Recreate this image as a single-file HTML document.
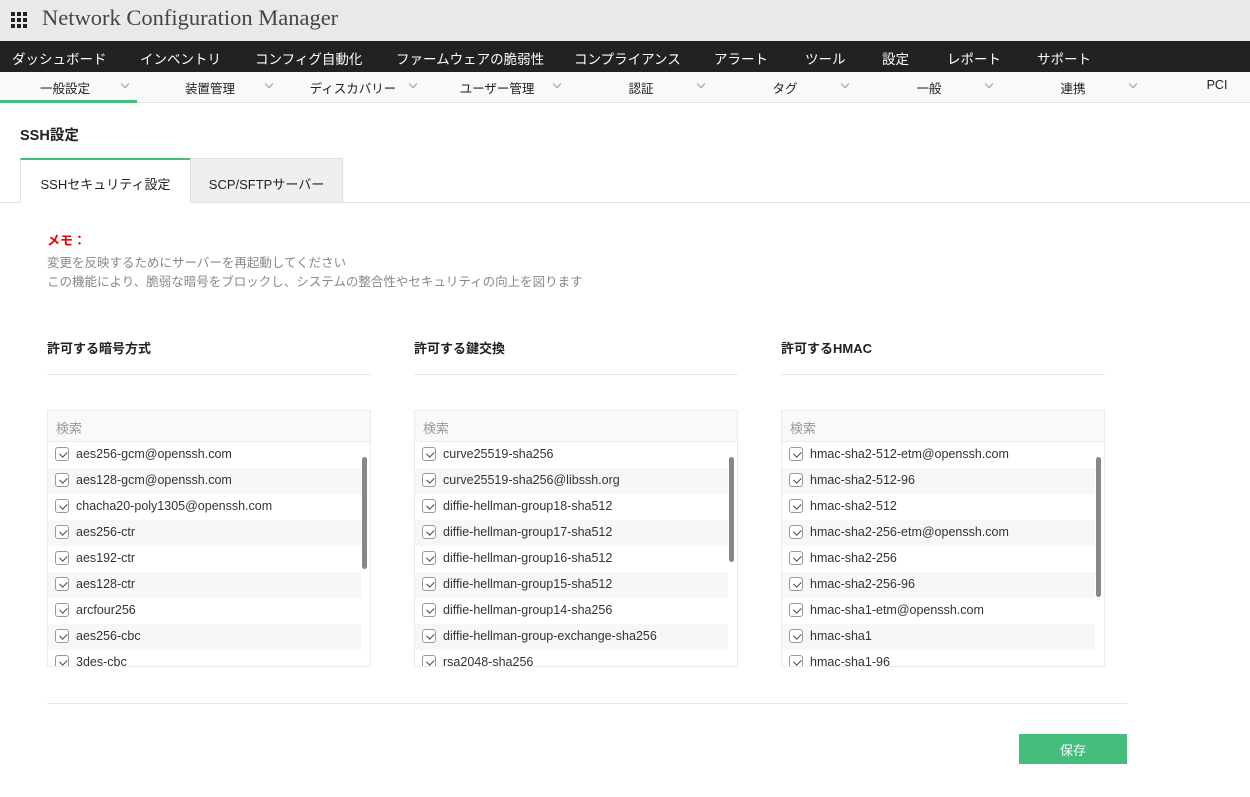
<!DOCTYPE html>
<html><head><meta charset="utf-8">
<style>
*{margin:0;padding:0;box-sizing:border-box}
body{width:1250px;height:797px;overflow:hidden;background:#fff;font-family:"Liberation Sans","Noto Sans CJK JP",sans-serif;position:relative;color:#222}
.a{position:absolute}
#hdr{left:0;top:0;width:1250px;height:41px;background:#e9e9e9}
#hdr .t{left:42px;top:5px;font-family:"Liberation Serif","Noto Serif CJK SC",serif;font-size:22.5px;color:#444;white-space:nowrap}
#nav{left:0;top:41px;width:1250px;height:31px;background:#222}
#nav span{position:absolute;top:7px;color:#fff;font-size:13.5px;white-space:nowrap}
#sub{left:0;top:72px;width:1250px;height:31px;background:#f9f9f9;border-bottom:1px solid #e6e6e6}
#sub span{position:absolute;top:6px;font-size:12.5px;color:#222;white-space:nowrap;transform:translateX(-50%)}
.chev{position:absolute;top:9px;width:6px;height:6px;border-right:1px solid #999;border-bottom:1px solid #999;transform:rotate(45deg)}
.list{width:324px;height:257px;border:1px solid #ececec;overflow:hidden;background:#fff}
.list .s{height:31px;background:#f9f9f9;border-bottom:1px solid #ececec;color:#999;font-size:13px;padding:7px 8px}
.row{height:26px;font-size:12.5px;color:#333;padding:5px 0 0 28px;position:relative;white-space:nowrap;width:313px}
.row:nth-child(even){background:#f7f7f7}
.row i{position:absolute;left:7px;top:5px;width:14px;height:14px;border:1px solid #999;border-radius:3px;background:#fff}
.row i:after{content:"";position:absolute;left:3px;top:1px;width:6px;height:3.5px;border-left:1.3px solid #444;border-bottom:1.3px solid #444;transform:rotate(-45deg) translate(-1px,2px)}
.sb{position:absolute;right:3px;width:5px;background:#888;border-radius:3px}
.h{font-size:13px;font-weight:bold;color:#222}
.ul{height:1px;background:#e8e8e8;width:324px}
</style></head><body>
<div id="hdr" class="a">
<svg class="a" style="left:11px;top:12px" width="17" height="17"><g fill="#222"><rect x="0" y="0" width="4" height="4"/><rect x="6" y="0" width="4" height="4"/><rect x="12" y="0" width="4" height="4"/><rect x="0" y="6" width="4" height="4"/><rect x="6" y="6" width="4" height="4"/><rect x="12" y="6" width="4" height="4"/><rect x="0" y="12" width="4" height="4"/><rect x="6" y="12" width="4" height="4"/><rect x="12" y="12" width="4" height="4"/></g></svg>
<div class="a t">Network Configuration Manager</div></div>
<div id="nav" class="a">
<span style="left:12px">ダッシュボード</span><span style="left:140px">インベントリ</span><span style="left:255px">コンフィグ自動化</span><span style="left:396px">ファームウェアの脆弱性</span><span style="left:574px">コンプライアンス</span><span style="left:714px">アラート</span><span style="left:805px">ツール</span><span style="left:882px">設定</span><span style="left:947px">レポート</span><span style="left:1037px">サポート</span>
</div>
<div id="sub" class="a">
<span style="left:65px">一般設定</span><div class="chev" style="left:122px"></div>
<span style="left:210px">装置管理</span><div class="chev" style="left:266px"></div>
<span style="left:353px">ディスカバリー</span><div class="chev" style="left:410px"></div>
<span style="left:497px">ユーザー管理</span><div class="chev" style="left:554px"></div>
<span style="left:641px">認証</span><div class="chev" style="left:698px"></div>
<span style="left:785px">タグ</span><div class="chev" style="left:842px"></div>
<span style="left:929px">一般</span><div class="chev" style="left:986px"></div>
<span style="left:1073px">連携</span><div class="chev" style="left:1130px"></div>
<span style="left:1217px">PCI</span>
<div class="a" style="left:0;top:28px;width:137px;height:3px;background:#45be7d"></div>
</div>
<div class="a" style="left:20px;top:124px;font-size:14.5px;font-weight:bold">SSH設定</div>
<div class="a" style="left:0;top:202px;width:1250px;height:1px;background:#e2e2e2"></div>
<div class="a" style="left:20px;top:158px;width:171px;height:45px;background:#fff;border-top:2px solid #45be7d;border-left:1px solid #e2e2e2;border-right:1px solid #e2e2e2;font-size:13px;text-align:center;padding-top:14px">SSHセキュリティ設定</div>
<div class="a" style="left:190px;top:158px;width:153px;height:44px;background:#efefef;border:1px solid #e0e0e0;border-bottom:none;font-size:13px;text-align:center;padding-top:15px">SCP/SFTPサーバー</div>
<div class="a" style="left:47px;top:230px;font-size:13px;font-weight:bold;color:#e00">メモ：</div>
<div class="a" style="left:47px;top:254px;font-size:12.5px;color:#888;line-height:19px">変更を反映するためにサーバーを再起動してください<br>この機能により、脆弱な暗号をブロックし、システムの整合性やセキュリティの向上を図ります</div>

<div class="a h" style="left:47px;top:338px">許可する暗号方式</div>
<div class="a h" style="left:414px;top:338px">許可する鍵交換</div>
<div class="a h" style="left:781px;top:338px">許可するHMAC</div>
<div class="a ul" style="left:47px;top:374px"></div>
<div class="a ul" style="left:414px;top:374px"></div>
<div class="a ul" style="left:781px;top:374px"></div>

<div class="a list" style="left:47px;top:410px"><div class="s">検索</div><div>
<div class="row"><i></i>aes256-gcm@openssh.com</div><div class="row"><i></i>aes128-gcm@openssh.com</div><div class="row"><i></i>chacha20-poly1305@openssh.com</div><div class="row"><i></i>aes256-ctr</div><div class="row"><i></i>aes192-ctr</div><div class="row"><i></i>aes128-ctr</div><div class="row"><i></i>arcfour256</div><div class="row"><i></i>aes256-cbc</div><div class="row"><i></i>3des-cbc</div></div>
<div class="sb" style="top:46px;height:112px"></div></div>

<div class="a list" style="left:414px;top:410px"><div class="s">検索</div><div>
<div class="row"><i></i>curve25519-sha256</div><div class="row"><i></i>curve25519-sha256@libssh.org</div><div class="row"><i></i>diffie-hellman-group18-sha512</div><div class="row"><i></i>diffie-hellman-group17-sha512</div><div class="row"><i></i>diffie-hellman-group16-sha512</div><div class="row"><i></i>diffie-hellman-group15-sha512</div><div class="row"><i></i>diffie-hellman-group14-sha256</div><div class="row"><i></i>diffie-hellman-group-exchange-sha256</div><div class="row"><i></i>rsa2048-sha256</div></div>
<div class="sb" style="top:46px;height:105px"></div></div>

<div class="a list" style="left:781px;top:410px"><div class="s">検索</div><div>
<div class="row"><i></i>hmac-sha2-512-etm@openssh.com</div><div class="row"><i></i>hmac-sha2-512-96</div><div class="row"><i></i>hmac-sha2-512</div><div class="row"><i></i>hmac-sha2-256-etm@openssh.com</div><div class="row"><i></i>hmac-sha2-256</div><div class="row"><i></i>hmac-sha2-256-96</div><div class="row"><i></i>hmac-sha1-etm@openssh.com</div><div class="row"><i></i>hmac-sha1</div><div class="row"><i></i>hmac-sha1-96</div></div>
<div class="sb" style="top:46px;height:140px"></div></div>

<div class="a" style="left:47px;top:703px;width:1080px;height:1px;background:#e8e8e8"></div>
<div class="a" style="left:1019px;top:734px;width:108px;height:30px;background:#45be7d;color:#fff;font-size:13px;text-align:center;padding-top:6px">保存</div>
</body></html>
